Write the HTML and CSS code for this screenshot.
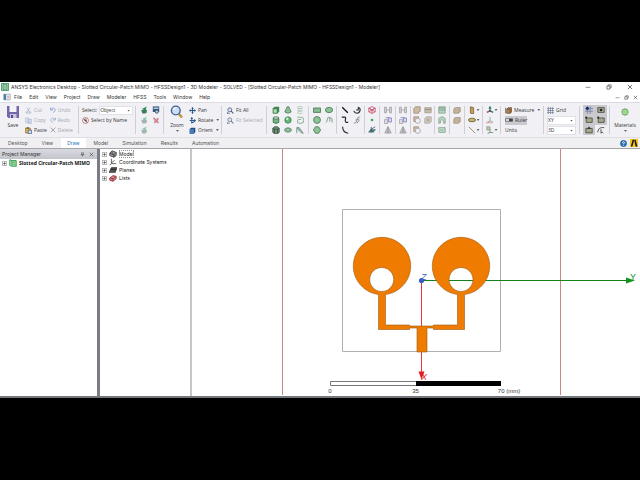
FILE: index.html
```html
<!DOCTYPE html>
<html lang="en">
<head>
<meta charset="utf-8">
<title>ANSYS Electronics Desktop</title>
<link rel="stylesheet" href="styles.css">
</head>
<body>
<svg class="defs" aria-hidden="true">
  <symbol id="save" viewBox="0 0 14 14"><path d="M1 1h12v12H2.500L1 11.500z" fill="#7468a8"/><path d="M3.500 1h7v6h-7z" fill="#f4f3fa"/><path d="M4 9h6.500v4H4z" fill="#c9c5df"/><path d="M5 10h2v3H5z" fill="#554a88"/></symbol>
  <symbol id="cut" viewBox="0 0 10 10"><path d="M3 1l3.500 6M7 1L3.500 7" stroke="#96a0b4" fill="none"/><circle cx="2.800" cy="8" r="1.300" stroke="#96a0b4" fill="none"/><circle cx="7" cy="8" r="1.300" stroke="#96a0b4" fill="none"/></symbol>
  <symbol id="copy" viewBox="0 0 10 10"><path d="M.5 1.500h5v6h-5zM4 3.500h5.500v6H4z" fill="#dfe6f2" stroke="#9cadca"/><path d="M5 6h3M5 8h3" stroke="#9cadca"/></symbol>
  <symbol id="paste" viewBox="0 0 10 10"><path d="M.5 1.500h7v7h-7z" fill="#e3b550" stroke="#8b6d2e"/><path d="M2.500.5h3v2h-3z" fill="#555"/><path d="M4.500 4.500h5v5h-5z" fill="#cfdcf2" stroke="#35537f"/></symbol>
  <symbol id="undo" viewBox="0 0 10 10"><path d="M1 1v4h4M1.500 4.500C4 .5 9 1.500 8.500 5.500 8 8 6 9 5 9" fill="none" stroke="#6f92c8" stroke-width="1.600"/></symbol>
  <symbol id="redo" viewBox="0 0 10 10"><path d="M9 1v4H5M8.500 4.500C6 .5 1 1.500 1.500 5.500 2 8 4 9 5 9" fill="none" stroke="#8ba7d2" stroke-width="1.600"/></symbol>
  <symbol id="x" viewBox="0 0 10 10"><path d="M1 1l8 8M9 1L1 9" stroke="#6b717c" stroke-width="1.200"/></symbol>
  <symbol id="byname" viewBox="0 0 10 10"><circle cx="5" cy="5" r="4.200" fill="#fff" stroke="#b23c3c"/><path d="M3 2.500l4 5M6.500 3H4.500L3.500 5h3L5.500 7.500" stroke="#333" fill="none"/></symbol>
  <symbol id="check" viewBox="0 0 10 10"><path d="M0 1.500l3 2L8.500.5 7 4h2L5.500 5.500z" fill="#1c8b50"/><path d="M1.500 5h7v3L6.500 9.500H3z" fill="#3f7a59"/></symbol>
  <symbol id="check2" viewBox="0 0 10 10"><path d="M0 1.500l3 2L8.500.5 7 4h2L5.500 5.500z" fill="#8fc6a8"/><path d="M1.500 5h7v3L6.500 9.500H3z" fill="#a5b5ad"/></symbol>
  <symbol id="calc" viewBox="0 0 10 10"><path d="M1 .5h8v7H1z" fill="#38597d"/><path d="M2 2h6v1.500H2z" fill="#dce8f5"/><circle cx="6" cy="7" r="2" fill="#b8d1e9" stroke="#284563"/></symbol>
  <symbol id="nocheck" viewBox="0 0 10 10"><path d="M1 2l3 2 4-2v6H3z" fill="#c2c5c8"/><path d="M2 2l6 7M8 3L3 9" stroke="#df7180" stroke-width="1.500"/></symbol>
  <symbol id="zoom" viewBox="0 0 14 14"><path d="M8.500 8.500L12 12.500" stroke="#bd9640" stroke-width="2.600"/><circle cx="5.800" cy="5.500" r="4.400" fill="#c9def8" stroke="#49618f" stroke-width="1.400"/><path d="M3.500 5q0-2 2.500-2" stroke="#fff" fill="none"/></symbol>
  <symbol id="pan" viewBox="0 0 10 10"><path d="M5 0l2 2.300H5.700v2h2V3L10 5 7.700 7V5.700h-2v2H7L5 10 3 7.700h1.300v-2h-2V7L0 5l2.300-2v1.300h2v-2H3z" fill="#235487"/></symbol>
  <symbol id="rotate" viewBox="0 0 10 10"><path d="M4 9V1M1 5h8M3 8q5 1 5-3" fill="none" stroke="#235487" stroke-width="1.400"/><path d="M4 0l2 2.500H2zM10 5L7.500 7.500v-5z" fill="#235487"/></symbol>
  <symbol id="orient" viewBox="0 0 10 10"><path d="M1 3l2-2h6v6L7 9.500H1z" fill="#254b84"/><path d="M1 3h6v6.500H1z" fill="#477db8"/></symbol>
  <symbol id="fit" viewBox="0 0 10 10"><circle cx="4" cy="4" r="2.800" fill="#dce6f4" stroke="#52627c" stroke-width="1.200"/><path d="M6 6l3 3" stroke="#52627c" stroke-width="1.700"/><path d="M0 9h4M1 7v3" stroke="#52627c"/></symbol>
  <symbol id="box" viewBox="0 0 10 10"><path d="M1 3l2-2h6v6L7 9.500H1z" fill="#408754"/><path d="M1.500 3.500h5V9h-5z" fill="#a9dcb2" stroke="#35613f" stroke-width=".7"/></symbol>
  <symbol id="cyl" viewBox="0 0 10 10"><path d="M1.500 2.500v5.500q3.500 2.500 7 0V2.500" fill="#72b681" stroke="#376643"/><ellipse cx="5" cy="2.500" rx="3.500" ry="1.500" fill="#d1ecd5" stroke="#376643"/></symbol>
  <symbol id="poly3" viewBox="0 0 10 10"><path d="M1 3l2-2h4l2 2v5L7 9.500H3L1 8z" fill="#72957a" stroke="#30483a"/><path d="M1 3l2 1h4l2-1M3 4v5M7 4v5" fill="none" stroke="#30483a"/></symbol>
  <symbol id="cone" viewBox="0 0 10 10"><path d="M4 1h2l3 6.500Q5 10.500 1 7.500z" fill="#8bbf99" stroke="#51795c"/></symbol>
  <symbol id="ball" viewBox="0 0 10 10"><circle cx="5" cy="5" r="4" fill="#65b875" stroke="#3f7c4c"/><circle cx="4" cy="3.500" r="1.500" fill="#c3efc9"/></symbol>
  <symbol id="torus" viewBox="0 0 10 10"><ellipse cx="5" cy="5" rx="4.300" ry="2.700" fill="#8ebf99" stroke="#5d8467"/><ellipse cx="5" cy="4.500" rx="1.800" ry=".8" fill="#f0f1f4" stroke="#5d8467" stroke-width=".6"/></symbol>
  <symbol id="helix" viewBox="0 0 10 10"><path d="M8 1Q2 0 2 2t6 1Q2 3 2 5t6 1Q2 6 2 8t6 1" fill="none" stroke="#a8c1b0"/></symbol>
  <symbol id="spiral" viewBox="0 0 10 10"><path d="M1.500 1.500H6a3.500 3.500 0 010 7.500H4a2 2 0 010-4.500h2.500" fill="none" stroke="#94b39e" stroke-width="1.300"/></symbol>
  <symbol id="bond" viewBox="0 0 10 10"><path d="M1 9V2h3l5 7" fill="none" stroke="#648670"/><path d="M2 2l7 7H7L2 4z" fill="#a7c8af" stroke="#648670" stroke-width=".7"/></symbol>
  <symbol id="rect" viewBox="0 0 10 10"><path d="M.5 2.500h9v5.500h-9z" fill="#86bd92" stroke="#416c4b"/></symbol>
  <symbol id="ell" viewBox="0 0 10 10"><ellipse cx="5" cy="5" rx="4.500" ry="3.300" fill="#8bc497" stroke="#47764f"/></symbol>
  <symbol id="circ" viewBox="0 0 10 10"><circle cx="5" cy="5" r="4.300" fill="#8bc497" stroke="#47764f"/></symbol>
  <symbol id="hex" viewBox="0 0 10 10"><path d="M3 1h4l2.500 4L7 9H3L.5 5z" fill="#8bc497" stroke="#47764f"/></symbol>
  <symbol id="eq" viewBox="0 0 10 10"><path d="M1 8q1.500 0 2-4t3-2v5M6 3q3-3 3 5" fill="none" stroke="#81998a" stroke-width="1.200"/></symbol>
  <symbol id="line" viewBox="0 0 10 10"><path d="M1.500 1.500l7 7" stroke="#111" stroke-width="1.600"/></symbol>
  <symbol id="zig" viewBox="0 0 10 10"><path d="M1 1.500h3.500q2 0 1 2.500t1 4H9" fill="none" stroke="#20292a" stroke-width="1.500"/></symbol>
  <symbol id="arc3" viewBox="0 0 10 10"><path d="M2 1q0 7 7 8" fill="none" stroke="#20292a" stroke-width="1.400"/></symbol>
  <symbol id="arcc" viewBox="0 0 10 10"><path d="M1 6q1 3 4 3t4-4q0-3-3-3.500M4 5h2.500V2.500" fill="none" stroke="#20292a" stroke-width="1.300"/></symbol>
  <symbol id="eqc" viewBox="0 0 10 10"><path d="M1 9q4 0 4-4t4-4M3 5l5-1M5 9l3-4" fill="none" stroke="#8b9692" stroke-width="1.200"/></symbol>
  <symbol id="region" viewBox="0 0 10 10"><path d="M5 .7l4 2v4.600l-4 2-4-2V2.700zM1 2.700l4 2 4-2M5 4.700v4.600M1 7.300l8-4.600M1 2.700l8 4.600" fill="none" stroke="#c64e6b"/></symbol>
  <symbol id="pt" viewBox="0 0 10 10"><circle cx="5" cy="5" r="1.700" fill="#39a951"/></symbol>
  <symbol id="plane" viewBox="0 0 10 10"><path d="M0 8l3-4h7L7 8z" fill="#497f75"/><path d="M4 1v7M4 4l5-3" stroke="#384f68"/></symbol>
  <symbol id="mir" viewBox="0 0 10 10"><path d="M.5 1.500H3v7H.5zM7 1.500h2.500v7H7zM3 5h4" fill="#d3d3d6" stroke="#a0a0a5"/></symbol>
  <symbol id="dup" viewBox="0 0 10 10"><path d="M.5 4.500h4v5h-4z" fill="#ddd" stroke="#a0a0a5"/><path d="M5.500 2.500h4v5h-4z" fill="#d8d8ee" stroke="#7d7fc0"/><path d="M2 2h5" stroke="#7d7fc0"/></symbol>
  <symbol id="tri" viewBox="0 0 10 10"><path d="M5 .8l4 8H1z" fill="#c4c4c8" stroke="#9c9ca2"/><path d="M5 1v8" stroke="#888"/></symbol>
  <symbol id="unite" viewBox="0 0 10 10"><path d="M1 3l2-2h6v6H7v2H1z" fill="#cbb9a3" stroke="#a1917f"/></symbol>
  <symbol id="sub" viewBox="0 0 10 10"><path d="M1 1h6v6H1z" fill="#cbb9a3" stroke="#a1917f"/><circle cx="6" cy="6" r="3.200" fill="#f1f1f4" stroke="#a1a1a5"/></symbol>
  <symbol id="split" viewBox="0 0 10 10"><path d="M1 2h8v6.500H1z" fill="#cabba8" stroke="#a69c92"/><path d="M1 4.500h8" stroke="#858588"/></symbol>
  <symbol id="imp" viewBox="0 0 10 10"><path d="M1 3l2-2h6v6L7 9H1z" fill="#d5cec5" stroke="#aaa29a"/><circle cx="5" cy="5" r="2.500" fill="#bcb1a4"/></symbol>
  <symbol id="surf" viewBox="0 0 10 10"><path d="M1 1h8v8H1z" fill="#b7d2c0" stroke="#83a58e"/><path d="M1 5h8M1 2.500h8" stroke="#6e997c"/></symbol>
  <symbol id="surf2" viewBox="0 0 10 10"><path d="M1 9V3q4-4 8 0v6H7V6Q5 3 3 6v3z" fill="#b7d2c0" stroke="#83a58e"/></symbol>
  <symbol id="surf3" viewBox="0 0 10 10"><path d="M1 2h8v6H1z" fill="#c0d8c8" stroke="#83a58e"/><path d="M3 4l2 2 2-2" stroke="#83a58e" fill="none"/></symbol>
  <symbol id="fillet" viewBox="0 0 10 10"><path d="M1 9V5q0-3 3-3h5v5L7 9z" fill="#c9b79f" stroke="#998c7c"/><path d="M2 5h5v4" stroke="#b3a592" fill="none"/></symbol>
  <symbol id="face" viewBox="0 0 10 10"><path d="M3 1l4 1v8L3 9z" fill="#c69c58" stroke="#77643d"/></symbol>
  <symbol id="sweep" viewBox="0 0 10 10"><ellipse cx="5" cy="5" rx="4.500" ry="2.300" fill="#a99856" stroke="#71622d"/><path d="M2 5h6" stroke="#e6dfbd"/></symbol>
  <symbol id="edge" viewBox="0 0 10 10"><path d="M1 1l8 8" stroke="#a48b63" stroke-width="1.200"/></symbol>
  <symbol id="cs" viewBox="0 0 10 10"><path d="M5 6V1" stroke="#24744c" stroke-width="1.400"/><path d="M5 6l4 2" stroke="#238552" stroke-width="1.800"/><path d="M5 6L1 8" stroke="#bc3e4a" stroke-width="1.800"/><path d="M5 0l2 3H3z" fill="#24744c"/><circle cx="5" cy="6" r="1.300" fill="#315a91"/></symbol>
  <symbol id="cs2" viewBox="0 0 10 10"><path d="M5 1v5l4 2" stroke="#8fc0a7" fill="none" stroke-width="1.300"/><path d="M5 6L1 8.500h7" stroke="#df9aa0" fill="none" stroke-width="1.300"/></symbol>
  <symbol id="cs3" viewBox="0 0 10 10"><path d="M1 1h4v4H1z" fill="#bfcbb9" stroke="#8a9b87"/><path d="M5 4v4h4M5 8L2 9" fill="none" stroke="#7c9f80" stroke-width="1.300"/></symbol>
  <symbol id="measure" viewBox="0 0 10 10"><path d="M.5 1v8" stroke="#333"/><path d="M2.500 3l2-2h5v6l-2 2h-5z" fill="#b58450" stroke="#5e4228"/><path d="M2.500 3h5v6" fill="none" stroke="#5e4228"/></symbol>
  <symbol id="ruler" viewBox="0 0 10 5"><path d="M.5 1h9v3h-9z" fill="#fff" stroke="#333" stroke-width=".8"/><path d="M5 1h4.500v3H5z" fill="#444"/></symbol>
  <symbol id="grid" viewBox="0 0 10 10"><path d="M2 0v10M5 0v10M8 0v10M0 2h10M0 5h10M0 8h10" stroke="#637591" stroke-width=".9"/></symbol>
  <symbol id="snapg" viewBox="0 0 10 10"><path d="M3 0v10M6.500 0v10M0 3h10M0 6.500h10" stroke="#566d9b" stroke-width=".8"/><circle cx="3" cy="3" r="2" fill="#112f70"/></symbol>
  <symbol id="snapc" viewBox="0 0 10 10"><path d="M1 2h8v6H1z" fill="#a9ac94" stroke="#43463e"/><circle cx="5" cy="5" r="1.700" fill="#222"/></symbol>
  <symbol id="snapv" viewBox="0 0 10 10"><path d="M1.500 2.500h7.500V8H1.500z" fill="#a5a98c" stroke="#43463e"/><circle cx="1.500" cy="2" r="1.300" fill="#222"/></symbol>
  <symbol id="snape" viewBox="0 0 10 10"><path d="M1 3h8v5.500H1z" fill="#a5a98c" stroke="#43463e"/><path d="M5 .5l2 3H3z" fill="#222"/></symbol>
  <symbol id="snapa" viewBox="0 0 10 10"><path d="M1 8Q1 1 9 2M5 4v5l1.500-1.500L8 9" fill="none" stroke="#333"/></symbol>
  <symbol id="mat" viewBox="0 0 10 10"><circle cx="5" cy="5" r="4" fill="#8ed183" stroke="#5e9d58"/><path d="M2 3.500h6M1.500 6.500h7" stroke="#b7e5ae"/></symbol>
  <symbol id="app" viewBox="0 0 10 10"><path d="M.5.5h9v9h-9z" fill="#d6eedb" stroke="#1b8846"/><path d="M2.500 2v6M2.500 2h2M2.500 8h2M7.500 2v6M7.500 2h-2M7.500 8h-2M5 3v4" stroke="#146b36" fill="none"/></symbol>
  <symbol id="doc" viewBox="0 0 10 10"><path d="M1 1.500h8v7H1z" fill="#fff" stroke="#8ba2b2"/><path d="M1 1.500h3v7H1z" fill="#477fa9"/><path d="M5 4h3M5 6h3" stroke="#c77d78"/></symbol>
  <symbol id="min" viewBox="0 0 10 10"><path d="M1 5.500h8" stroke="#444"/></symbol>
  <symbol id="max" viewBox="0 0 10 10"><path d="M1.500 3.500h5v5h-5zM3.500 3V1.500h5v5H7" fill="none" stroke="#333"/></symbol>
  <symbol id="close" viewBox="0 0 10 10"><path d="M1.500 1.500l7 7M8.500 1.500l-7 7" stroke="#333" stroke-width="1.100"/></symbol>
  <symbol id="pin" viewBox="0 0 10 10"><path d="M3 1.500h4v4H3zM1.500 5.500h7M5 5.500V9" fill="none" stroke="#444"/></symbol>
  <symbol id="plus" viewBox="0 0 10 10"><path d="M.8.8h8.400v8.400H.8z" fill="#fff" stroke="#888" stroke-width="1.300"/><path d="M2.500 5h5M5 2.500v5" stroke="#333" stroke-width="1.300"/></symbol>
  <symbol id="proj" viewBox="0 0 10 10"><path d="M1 1l3 1h5v7H3L1 8z" fill="#b8e9be" stroke="#2e9a4a" stroke-width="1.200"/><path d="M4 4h4M4 6.500h4M3.500 2v6" stroke="#2e9a4a"/></symbol>
  <symbol id="model" viewBox="0 0 10 10"><path d="M1 4l3-3 5 2v4L6 9 1 7z" fill="#9a9a9a" stroke="#333"/><path d="M1 4l5 2 3-3M6 6v3M3 2l4 6" stroke="#333" fill="none" stroke-width=".8"/></symbol>
  <symbol id="axes" viewBox="0 0 10 10"><path d="M3 1v6h6M3 7L1 9M3 6l4-3" stroke="#444" fill="none"/></symbol>
  <symbol id="planes" viewBox="0 0 10 10"><path d="M0 8l2-4h7L8 8zM2 4l1-2h7L9 5z" fill="#555" stroke="#222" stroke-width=".7"/></symbol>
  <symbol id="lists" viewBox="0 0 10 10"><path d="M1 5l4-3 4 1v3L5 9 1 8z" fill="#d58a8a" stroke="#8a2f35"/><path d="M1 5l4 1 4-3M5 6v3" fill="none" stroke="#8a2f35"/></symbol>
  <symbol id="help" viewBox="0 0 10 10"><circle cx="5" cy="5" r="4.500" fill="#2f70b5" stroke="#1c4d86" stroke-width=".6"/><path d="M3.500 4q0-1.500 1.500-1.500T6.500 4Q6 5 5 5.200V6M5 7v1" fill="none" stroke="#fff" stroke-width="1.200"/></symbol>
  <symbol id="logo" viewBox="0 0 10 10"><path d="M0 0h10v10H0z" fill="#f2c51c"/><path d="M3.300 1h2L3 9.500H1zM5.300 1H7l2.300 8.500H7z" fill="#161616"/></symbol>
</svg>

<div class="app">
  <header class="titlebar">
    <svg class="i8"><use href="#app"/></svg>
    <h1>ANSYS Electronics Desktop - Slotted Circular-Patch MIMO - HFSSDesign1 - 3D Modeler - SOLVED - [Slotted Circular-Patch MIMO - HFSSDesign1 - Modeler]</h1>
    <div class="winctl">
      <button aria-label="Minimize"><svg class="i6"><use href="#min"/></svg></button>
      <button aria-label="Restore"><svg class="i6"><use href="#max"/></svg></button>
      <button aria-label="Close"><svg class="i6"><use href="#close"/></svg></button>
    </div>
  </header>
  <nav class="menubar">
    <svg class="i8"><use href="#doc"/></svg>
    <button>File</button><button>Edit</button><button>View</button><button>Project</button><button>Draw</button><button>Modeler</button><button>HFSS</button><button>Tools</button><button>Window</button><button>Help</button>
    <div class="mdictl">
      <button aria-label="Minimize window"><svg class="i4"><use href="#min"/></svg></button>
      <button aria-label="Restore window"><svg class="i4"><use href="#max"/></svg></button>
      <button aria-label="Close window"><svg class="i4"><use href="#close"/></svg></button>
    </div>
  </nav>

  <div class="ribbon">
    <section class="group clip">
      <button class="big"><svg class="i14"><use href="#save"/></svg><span>Save</span></button>
      <div class="col">
        <button class="off"><svg class="i7"><use href="#cut"/></svg>Cut</button>
        <button class="off"><svg class="i7"><use href="#copy"/></svg>Copy</button>
        <button><svg class="i7"><use href="#paste"/></svg>Paste</button>
      </div>
      <div class="col">
        <button class="off"><svg class="i6"><use href="#undo"/></svg>Undo</button>
        <button class="off"><svg class="i6"><use href="#redo"/></svg>Redo</button>
        <button class="off"><svg class="i6"><use href="#x"/></svg>Delete</button>
      </div>
    </section>
    <section class="group select">
      <div class="col">
        <div class="field"><label for="sel">Select:</label><span class="combo"><select id="sel"><option>Object</option></select></span></div>
        <button><svg class="i7"><use href="#byname"/></svg>Select by Name</button>
      </div>
    </section>
    <section class="group icons two">
      <button aria-label="Validate"><svg><use href="#check"/></svg></button><button aria-label="Report"><svg><use href="#calc"/></svg></button>
      <button aria-label="Validate all"><svg><use href="#check2"/></svg></button><button aria-label="Clear"><svg><use href="#nocheck"/></svg></button>
      <button aria-label="Analyze"><svg><use href="#check2"/></svg></button>
    </section>
    <section class="group view">
      <button class="big"><svg class="i14"><use href="#zoom"/></svg><span>Zoom</span><i class="caret"></i></button>
      <div class="col">
        <button><svg class="i7"><use href="#pan"/></svg>Pan</button>
        <button><svg class="i7"><use href="#rotate"/></svg>Rotate<i class="caret"></i></button>
        <button><svg class="i7"><use href="#orient"/></svg>Orient<i class="caret"></i></button>
      </div>
    </section>
    <section class="group fit">
      <div class="col">
        <button><svg class="i7"><use href="#fit"/></svg>Fit All</button>
        <button class="off"><svg class="i7"><use href="#fit"/></svg>Fit Selected</button>
      </div>
    </section>
    <section class="group icons three">
      <button aria-label="Box"><svg><use href="#box"/></svg></button><button aria-label="Cone"><svg><use href="#cone"/></svg></button><button aria-label="Helix"><svg><use href="#helix"/></svg></button>
      <button aria-label="Cylinder"><svg><use href="#cyl"/></svg></button><button aria-label="Sphere"><svg><use href="#ball"/></svg></button><button aria-label="Spiral"><svg><use href="#spiral"/></svg></button>
      <button aria-label="Polyhedron"><svg><use href="#poly3"/></svg></button><button aria-label="Torus"><svg><use href="#torus"/></svg></button><button aria-label="Bondwire"><svg><use href="#bond"/></svg></button>
    </section>
    <section class="group icons two">
      <button aria-label="Rectangle"><svg><use href="#rect"/></svg></button><button aria-label="Ellipse"><svg><use href="#ell"/></svg></button>
      <button aria-label="Circle"><svg><use href="#circ"/></svg></button><button aria-label="Equation surface"><svg><use href="#eq"/></svg></button>
      <button aria-label="Polygon"><svg><use href="#hex"/></svg></button>
    </section>
    <section class="group icons two">
      <button aria-label="Line"><svg><use href="#line"/></svg></button><button aria-label="Center arc"><svg><use href="#arcc"/></svg></button>
      <button aria-label="Spline"><svg><use href="#zig"/></svg></button><button aria-label="Equation curve"><svg><use href="#eqc"/></svg></button>
      <button aria-label="Arc"><svg><use href="#arc3"/></svg></button>
    </section>
    <section class="group icons one">
      <button aria-label="Region"><svg><use href="#region"/></svg></button><button aria-label="Point"><svg><use href="#pt"/></svg></button><button aria-label="Plane"><svg><use href="#plane"/></svg></button>
    </section>
    <section class="group icons one roomy">
      <button aria-label="Move"><svg><use href="#mir"/></svg></button><button aria-label="Rotate object"><svg><use href="#dup"/></svg></button><button aria-label="Mirror"><svg><use href="#tri"/></svg></button>
    </section>
    <section class="group icons one">
      <button aria-label="Along line"><svg><use href="#mir"/></svg></button><button aria-label="Around axis"><svg><use href="#dup"/></svg></button><button aria-label="Through mirror"><svg><use href="#tri"/></svg></button>
    </section>
    <section class="group icons two tight">
      <button aria-label="Unite"><svg><use href="#unite"/></svg></button><button aria-label="Split"><svg><use href="#split"/></svg></button>
      <button aria-label="Subtract"><svg><use href="#sub"/></svg></button><button aria-label="Imprint"><svg><use href="#imp"/></svg></button>
      <button aria-label="Intersect"><svg><use href="#sub"/></svg></button>
    </section>
    <section class="group icons one">
      <button aria-label="Section"><svg><use href="#surf"/></svg></button><button aria-label="Wrap"><svg><use href="#surf2"/></svg></button><button aria-label="Cover"><svg><use href="#surf3"/></svg></button>
    </section>
    <section class="group icons one">
      <button aria-label="Fillet"><svg><use href="#fillet"/></svg></button><button aria-label="Chamfer"><svg><use href="#fillet"/></svg></button>
    </section>
    <section class="group icons drop">
      <button aria-label="Face"><svg><use href="#face"/></svg><i class="caret"></i></button><button aria-label="Sweep"><svg><use href="#sweep"/></svg><i class="caret"></i></button><button aria-label="Edge"><svg><use href="#edge"/></svg><i class="caret"></i></button>
    </section>
    <section class="group icons drop last">
      <button aria-label="Relative CS"><svg><use href="#cs"/></svg><i class="caret"></i></button><button aria-label="Face CS"><svg><use href="#cs2"/></svg></button><button aria-label="Object CS"><svg><use href="#cs3"/></svg><i class="caret"></i></button>
    </section>
    <section class="group measure">
      <div class="col">
        <button><svg class="i7"><use href="#measure"/></svg>Measure<i class="caret"></i></button>
        <button class="on"><svg class="i8"><use href="#ruler"/></svg>Ruler</button>
        <button>Units</button>
      </div>
    </section>
    <section class="group gridg">
      <div class="col">
        <button><svg class="i7"><use href="#grid"/></svg>Grid</button>
        <span class="combo"><select aria-label="Drawing plane"><option>XY</option></select></span>
        <span class="combo"><select aria-label="Movement mode"><option>3D</option></select></span>
      </div>
    </section>
    <section class="group icons two snap">
      <button class="on" aria-label="Snap grid"><svg><use href="#snapg"/></svg></button><button class="on" aria-label="Snap face center"><svg><use href="#snapc"/></svg></button>
      <button class="on" aria-label="Snap vertex"><svg><use href="#snapv"/></svg></button><button class="on" aria-label="Snap quadrant"><svg><use href="#snapv"/></svg></button>
      <button class="on" aria-label="Snap edge center"><svg><use href="#snape"/></svg></button><button aria-label="Snap arc center"><svg><use href="#snapa"/></svg></button>
    </section>
    <section class="group mats">
      <button class="big"><svg class="i14"><use href="#mat"/></svg><span>Materials</span><i class="caret"></i></button>
    </section>
  </div>

  <nav class="tabs">
    <button>Desktop</button><button>View</button><button class="active">Draw</button><button>Model</button><button>Simulation</button><button>Results</button><button>Automation</button>
    <div class="tabend">
      <button aria-label="Help"><svg class="i7"><use href="#help"/></svg></button>
      <button aria-label="ANSYS"><svg class="i8"><use href="#logo"/></svg></button>
    </div>
  </nav>

  <main class="work">
    <aside class="project">
      <div class="phead"><h2>Project Manager</h2>
        <button aria-label="Pin"><svg class="i4"><use href="#pin"/></svg></button>
        <button aria-label="Close panel"><svg class="i4"><use href="#close"/></svg></button>
      </div>
      <ul class="tree">
        <li><svg class="i4"><use href="#plus"/></svg><svg class="i8"><use href="#proj"/></svg><b>Slotted Circular-Patch MIMO</b></li>
      </ul>
    </aside>
    <aside class="history">
      <ul class="tree">
        <li><svg class="i4"><use href="#plus"/></svg><svg class="i8"><use href="#model"/></svg><span class="focus">Model</span></li>
        <li><svg class="i4"><use href="#plus"/></svg><svg class="i8"><use href="#axes"/></svg><span>Coordinate Systems</span></li>
        <li><svg class="i4"><use href="#plus"/></svg><svg class="i8"><use href="#planes"/></svg><span>Planes</span></li>
        <li><svg class="i4"><use href="#plus"/></svg><svg class="i8"><use href="#lists"/></svg><span>Lists</span></li>
      </ul>
    </aside>
    <div class="canvas">
      <svg viewBox="0 0 448 246" role="img" aria-label="Two-element slotted circular patch antenna, top view">
        <path d="M90.500 0v246M368.500 0v246" stroke="#c98686"/>
        <path d="M150.500 60.500h158v142h-158z" fill="none" stroke="#b0b0b0"/>
        <path d="M229.500 131.500H436" stroke="#12831b"/>
        <path d="M434 128.500l9 3-9 3z" fill="#159321"/>
        <path d="M229.500 131.500V224" stroke="#e8343c"/>
        <path fill-rule="evenodd" fill="#ef7b00" stroke="#9a5a18" stroke-width=".6" d="M186.500 145.500A28.700 28.700 0 1 1 193.500 145.500V176H217.500V177H241.500V176H265.500V145.500A28.700 28.700 0 1 1 272.500 145.500V180.500H241.500V179H235V203H225V179H217.500V180.500H186.500zM189.700 118.500a12 12 0 1 0 .01 0zM269 118.500a12 12 0 1 0 .01 0z"/>
        <circle cx="229.500" cy="131.500" r="2.600" fill="#3860c0"/>
        <path d="M226.500 222.500h6l-3 8z" fill="#e01b24"/>
        <text class="axis" x="229" y="130.500" fill="#3860c0">Z</text>
        <text class="axis" x="229" y="231" fill="#e01b24">X</text>
        <text class="axis upright" x="438" y="131" fill="#159321">Y</text>
        <path d="M138.500 232.500h170v4h-170z" fill="#fff" stroke="#777"/>
        <path d="M224 232h85v5h-85z"/>
        <g class="scale"><text x="138" y="244">0</text><text x="223.500" y="244">35</text><text x="317" y="244">70 (mm)</text></g>
      </svg>
    </div>
  </main>
</div>
</body>
</html>
```
FILE: styles.css
```css
* { box-sizing: border-box; }
body {
  margin: 0;
  min-height: 100vh;
  padding: 82px 0;
  display: flex;
  background: #000;
  color: #333;
  font: 5px/8px Inter, "Open Sans", sans-serif;
}
.defs { display: none; }
svg { display: block; flex: none; }
button, select {
  font: inherit;
  color: inherit;
  background: none;
  border: 0;
  margin: 0;
  padding: 0;
}
h1, h2 { margin: 0; font: inherit; }
ul { margin: 0; padding: 0; list-style: none; }

.i4 { width: 5px; height: 5px; }
.i6 { width: 6px; height: 6px; }
.i7 { width: 7px; height: 7px; }
.i8 { width: 8px; height: 8px; }
.i14 { width: 14px; height: 14px; }

.app { flex: 1; display: flex; flex-direction: column; background: #fff; min-width: 0; }

.titlebar { display: flex; align-items: center; height: 10px; padding: 0 7px 0 1px; gap: 2px; white-space: nowrap; }
.winctl, .mdictl, .tabend { margin-left: auto; display: flex; align-items: center; }
.winctl { gap: 15px; }
.menubar { display: flex; align-items: center; height: 10px; padding: 0 2px 0 3px; gap: 7px; }
.menubar > svg { margin-right: -4px; }
.mdictl { gap: 4px; }

.ribbon { display: flex; height: 35px; background: #f1f1f5; border-top: 1px solid #dcdce2; white-space: nowrap; font-family: "Open Sans", "Noto Sans", sans-serif; }
.group { display: flex; flex: none; padding: 2px 0 2px 3px; position: relative; }
.group::after {
  content: "";
  position: absolute;
  top: 3px;
  bottom: 3px;
  right: 0;
  width: 1px;
  background: #cfcfd8;
}
.col { display: grid; grid-template-rows: repeat(3, 10px); align-items: center; justify-items: start; }
.col button { display: flex; align-items: center; gap: 2px; height: 9px; }
.off { color: #a2a5ad; }
.off svg { opacity: .8; }
.on { background: #c9c9ce; }
.big { display: flex; flex-direction: column; align-items: center; }
.big span { height: 9px; margin-top: 2px; }
.caret { flex: none; width: 3px; height: 2px; margin-left: 1px; background: #666; clip-path: polygon(0 0, 100% 0, 50% 100%); }
.combo { display: block; position: relative; width: 29px; height: 9px; background: #fff; border: 1px solid #e0e0e6; }
.combo::after {
  content: "";
  position: absolute;
  right: 2px;
  top: 3px;
  width: 3px;
  height: 2px;
  background: #555;
  clip-path: polygon(0 0, 100% 0, 50% 100%);
}
.combo select { display: block; appearance: none; width: 100%; height: 7px; line-height: 7px; color: #333; }
.field { display: flex; align-items: center; gap: 2px; }

.clip { width: 79px; padding-left: 6px; gap: 5px; }
.clip .col + .col { margin-left: -2px; }
.select { width: 57px; }
.select .combo { width: 34px; }
.view { width: 58px; padding-left: 6px; gap: 5px; }
.fit { width: 45px; padding-left: 5px; }
.measure { width: 43px; padding-left: 4px; }
.gridg { width: 36px; }
.mats { flex: 1; justify-content: center; padding-left: 0; }
.mats::after { display: none; }
.mats .i14 { padding: 3px; }

.icons { display: grid; grid-template-rows: repeat(3, 10px); padding-left: 2px; justify-content: center; padding-right: 3px; }
.icons button { display: flex; align-items: center; justify-content: center; }
.icons svg { width: 8px; height: 8px; }
.one { width: 15px; }
.roomy { width: 16px; }
.two { width: 28px; grid-template-columns: 12px 12px; }
.tight { width: 24px; grid-template-columns: 11px 11px; }
.three { width: 42px; grid-template-columns: 12px 12px 12px; }
.drop { width: 18px; }
.icons.drop button { justify-content: flex-start; }
.snap { width: 30px; }

.tabs { display: flex; height: 12px; background: #f0f0f2; border-top: 1px solid #dedee3; border-bottom: 1px solid #a5a5aa; padding: 0 2px; gap: 2px; color: #555; }
.tabs > button { padding: 0 6px; }
.tabs .active { background: #fff; color: #1f6fb5; }
.tabend { gap: 3px; }

.work { flex: 1; display: flex; border-bottom: 2px solid #74777c; min-height: 0; }
.project { width: 100px; border-right: 3px solid #7b7d86; }
.phead { display: flex; align-items: center; gap: 4px; height: 10px; padding: 0 3px 0 2px; background: linear-gradient(#d9dae0, #c3c5cd); }
.phead h2 { margin-right: auto; }
.history { width: 92px; border-right: 2px solid #c6c6ca; padding-top: 1px; }
.tree { color: #222; white-space: nowrap; }
.tree li { display: flex; align-items: center; gap: 2px; height: 8px; padding-left: 2px; }
.tree b { color: #111; font-family: "Noto Sans", "Open Sans", sans-serif; }
.focus { outline: 1px dotted #999; outline-offset: -1px; }
.canvas { flex: 1; min-width: 0; }
.canvas svg { width: 100%; height: auto; }
.axis { font: italic 9px "Liberation Sans", sans-serif; }
.upright { font-style: normal; }
.scale { font: 6px "Liberation Sans", sans-serif; text-anchor: middle; fill: #333; }
```
